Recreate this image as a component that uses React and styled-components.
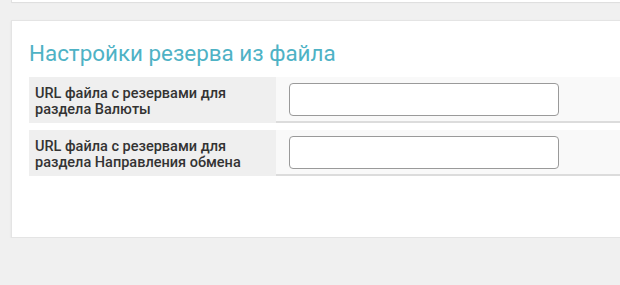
import styled, { createGlobalStyle } from "styled-components";

const GlobalStyle = createGlobalStyle`
  html, body {
    margin: 0;
    padding: 0;
    background: #f0f0f0;
    font-family: Roboto, "Liberation Sans", Arial, sans-serif;
    overflow: hidden;
  }
`;

const Page = styled.div`
  display: flex;
  flex-direction: column;
  gap: 18px;
  padding-left: 11px;
  width: 720px;
`;

const TopPanel = styled.div`
  height: 2px;
  background: #fff;
  border-left: 1px solid #e2e2e2;
  box-shadow: 0 1px 1px rgba(0, 0, 0, 0.08);
`;

const Card = styled.section`
  background: #fff;
  border: 1px solid #e4e4e4;
  border-right: none;
  box-shadow: 0 1px 2px rgba(0, 0, 0, 0.07);
  padding: 18px 0 61px 17px;
`;

const Title = styled.h2`
  margin: 0 0 9px;
  font-weight: 400;
  font-size: 22.4px;
  line-height: 29px;
  color: #4eb2c5;
`;

const Rows = styled.div`
  display: flex;
  flex-direction: column;
  gap: 7px;
`;

const Row = styled.div`
  display: grid;
  grid-template-columns: 247px 1fr;
  height: 46px;
`;

const Label = styled.div`
  background: #efefef;
  padding: 9px 6px 0;
  font-size: 14.5px;
  font-weight: 500;
  line-height: 16px;
  color: #333;
`;

const Field = styled.div`
  background: #f9f9f9;
  border-bottom: 2px solid #dcdcdc;
  padding: 6px 13px 0;
`;

const Input = styled.input`
  box-sizing: border-box;
  display: block;
  width: 270px;
  height: 33px;
  border: 1px solid #9a9a9a;
  border-radius: 4px;
  background: #fff;
  padding: 0 8px;
  font: inherit;
  outline: none;
`;

const rows = [
  "URL файла с резервами для раздела Валюты",
  "URL файла с резервами для раздела Направления обмена",
];

export default function App() {
  return (
    <>
      <GlobalStyle />
      <Page>
        <TopPanel />
        <Card>
          <Title>Настройки резерва из файла</Title>
          <Rows>
            {rows.map((text) => (
              <Row key={text}>
                <Label>{text}</Label>
                <Field>
                  <Input type="text" />
                </Field>
              </Row>
            ))}
          </Rows>
        </Card>
      </Page>
    </>
  );
}
